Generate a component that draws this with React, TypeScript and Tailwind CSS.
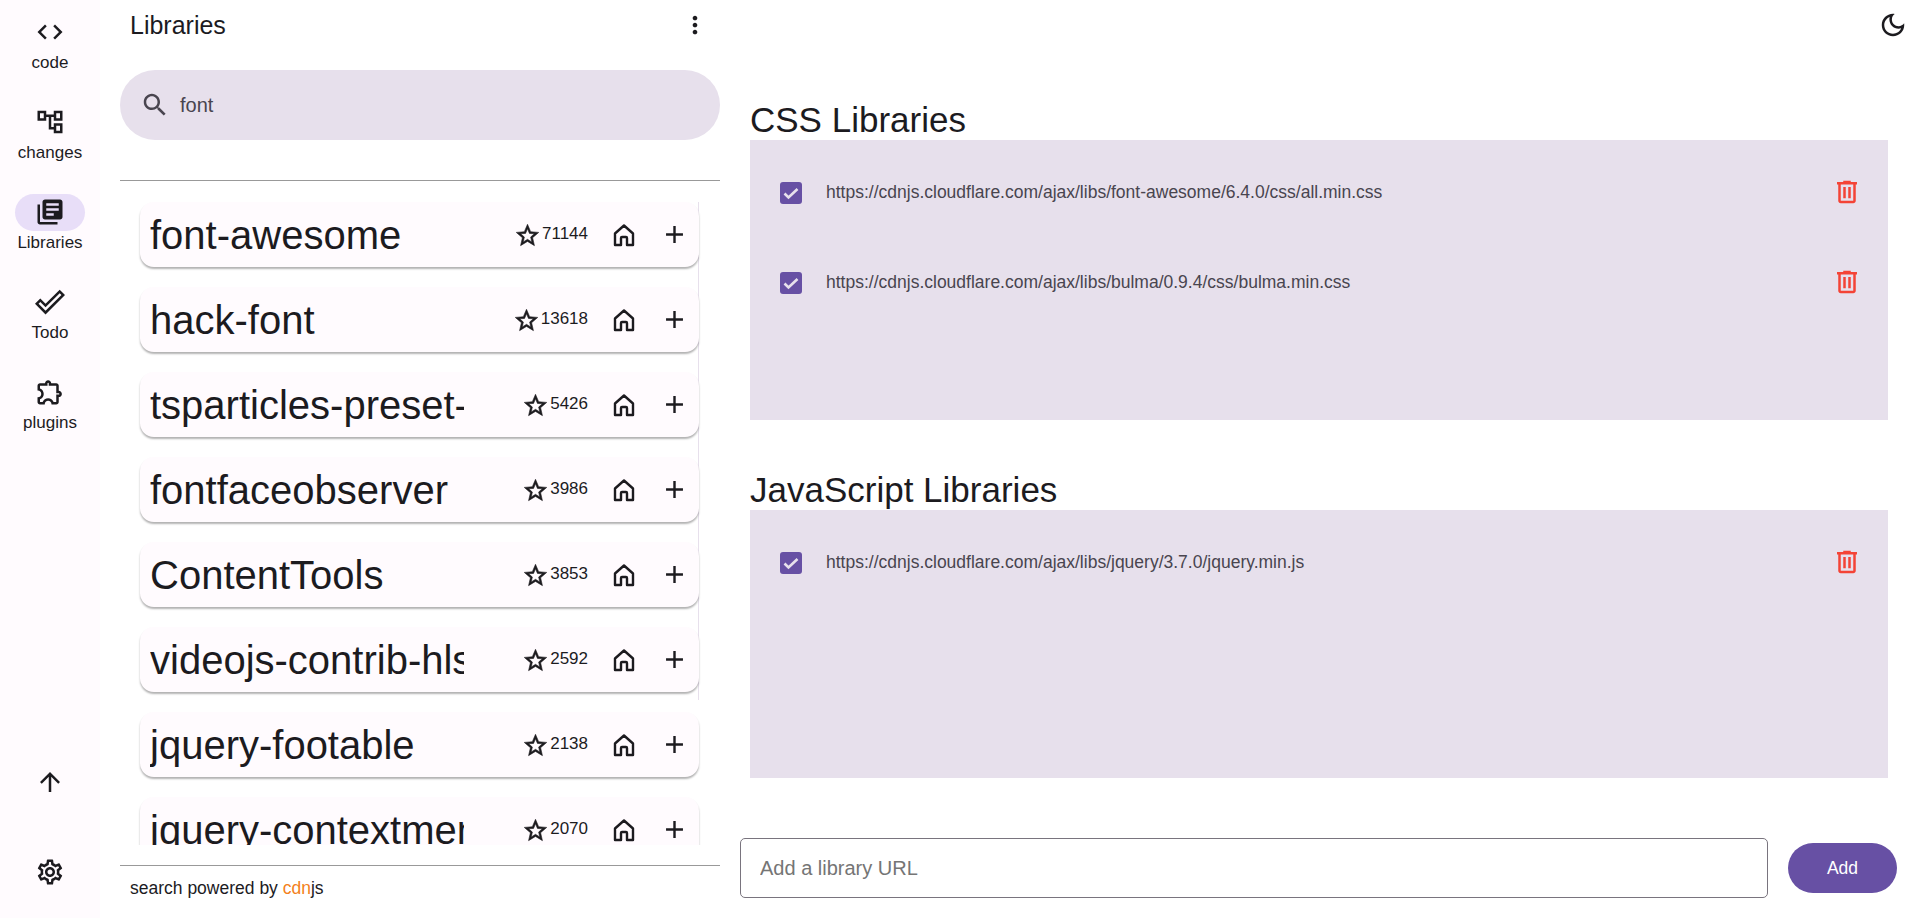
import React from "react";

const P = {
  code: "M9.4 16.6 4.8 12l4.6-4.6L8 6l-6 6 6 6 1.4-1.4zm5.2 0 4.6-4.6-4.6-4.6L16 6l6 6-6 6-1.4-1.4z",
  tree: "M22 11V3h-7v3H9V3H2v8h7V8h2v10h4v3h7v-8h-7v3h-2V8h2v3h7zM7 9H4V5h3v4zm10 6h3v4h-3v-4zm0-10h3v4h-3V5z",
  books: "M4 6H2v14c0 1.1.9 2 2 2h14v-2H4V6zm16-4H8c-1.1 0-2 .9-2 2v12c0 1.1.9 2 2 2h12c1.1 0 2-.9 2-2V4c0-1.1-.9-2-2-2zm-1 9H9V9h10v2zm-4 4H9v-2h6v2zm4-8H9V5h10v2z",
  done: "M19.77 4.93l1.4 1.4L8.43 19.07l-5.6-5.6 1.4-1.4 4.2 4.2L19.77 4.93m0-2.83L8.43 13.44l-4.2-4.2L0 13.47l8.43 8.43L24 6.33 19.77 2.1z",
  ext: "M10.5 4.5c.28 0 .5.22.5.5v2h6v6h2c.28 0 .5.22.5.5s-.22.5-.5.5h-2v6h-2.12c-.68-1.75-2.39-3-4.38-3s-3.7 1.25-4.38 3H4v-2.12c1.75-.68 3-2.39 3-4.38 0-1.99-1.24-3.7-2.99-4.38L4 7h6V5c0-.28.22-.5.5-.5m0-2C9.12 2.5 8 3.62 8 5H4c-1.1 0-1.99.9-1.99 2v3.8h.29c1.49 0 2.7 1.21 2.7 2.7s-1.21 2.7-2.7 2.7H2V20c0 1.1.9 2 2 2h3.8v-.3c0-1.49 1.21-2.7 2.7-2.7s2.7 1.21 2.7 2.7v.3H17c1.1 0 2-.9 2-2v-4c1.38 0 2.5-1.12 2.5-2.5S20.38 11 19 11V7c0-1.1-.9-2-2-2h-4c0-1.38-1.12-2.5-2.5-2.5z",
  up: "M4 12l1.41 1.41L11 7.83V20h2V7.83l5.58 5.59L20 12l-8-8-8 8z",
  gear: "M19.43 12.98c.04-.32.07-.64.07-.98 0-.34-.03-.66-.07-.98l2.11-1.65c.19-.15.24-.42.12-.64l-2-3.46c-.09-.16-.26-.25-.44-.25-.06 0-.12.01-.17.03l-2.49 1c-.52-.4-1.08-.73-1.69-.98l-.38-2.65C14.46 2.18 14.25 2 14 2h-4c-.25 0-.46.18-.49.42l-.38 2.65c-.61.25-1.17.59-1.69.98l-2.49-1c-.06-.02-.12-.03-.18-.03-.17 0-.34.09-.43.25l-2 3.46c-.13.22-.07.49.12.64l2.11 1.65c-.04.32-.07.65-.07.98 0 .33.03.66.07.98l-2.11 1.65c-.19.15-.24.42-.12.64l2 3.46c.09.16.26.25.44.25.06 0 .12-.01.17-.03l2.49-1c.52.4 1.08.73 1.69.98l.38 2.65c.03.24.24.42.49.42h4c.25 0 .46-.18.49-.42l.38-2.65c.61-.25 1.17-.59 1.69-.98l2.49 1c.06.02.12.03.18.03.17 0 .34-.09.43-.25l2-3.46c.12-.22.07-.49-.12-.64l-2.11-1.65zm-1.98-1.71c.04.31.05.52.05.73 0 .21-.02.43-.05.73l-.14 1.13.89.7 1.08.84-.7 1.21-1.27-.51-1.04-.42-.9.68c-.43.32-.84.56-1.25.73l-1.06.43-.16 1.13-.2 1.35h-1.4l-.19-1.35-.16-1.13-1.06-.43c-.43-.18-.83-.41-1.23-.71l-.91-.7-1.06.43-1.27.51-.7-1.21 1.08-.84.89-.7-.14-1.13c-.03-.31-.05-.54-.05-.74s.02-.43.05-.73l.14-1.13-.89-.7-1.08-.84.7-1.21 1.27.51 1.04.42.9-.68c.43-.32.84-.56 1.25-.73l1.06-.43.16-1.13.2-1.35h1.39l.19 1.35.16 1.13 1.06.43c.43.18.83.41 1.23.71l.91.7 1.06-.43 1.27-.51.7 1.21-1.07.85-.89.7.14 1.13zM12 8c-2.21 0-4 1.79-4 4s1.79 4 4 4 4-1.79 4-4-1.79-4-4-4zm0 6c-1.1 0-2-.9-2-2s.9-2 2-2 2 .9 2 2-.9 2-2 2z",
  more: "M12 8c1.1 0 2-.9 2-2s-.9-2-2-2-2 .9-2 2 .9 2 2 2zm0 2c-1.1 0-2 .9-2 2s.9 2 2 2 2-.9 2-2-.9-2-2-2zm0 6c-1.1 0-2 .9-2 2s.9 2 2 2 2-.9 2-2-.9-2-2-2z",
  search: "M15.5 14h-.79l-.28-.27C15.41 12.59 16 11.11 16 9.5 16 5.91 13.09 3 9.5 3S3 5.91 3 9.5 5.91 16 9.5 16c1.61 0 3.09-.59 4.23-1.57l.27.28v.79l5 4.99L20.49 19l-4.99-5zm-6 0C7.01 14 5 11.99 5 9.5S7.01 5 9.5 5 14 7.01 14 9.5 11.99 14 9.5 14z",
  star: "M22 9.24l-7.19-.62L12 2 9.19 8.63 2 9.24l5.46 4.73L5.82 21 12 17.27 18.18 21l-1.63-7.03L22 9.24zM12 15.4l-3.76 2.27 1-4.28-3.32-2.88 4.38-.38L12 6.1l1.71 4.04 4.38.38-3.32 2.88 1 4.28L12 15.4z",
  plus: "M19 13h-6v6h-2v-6H5v-2h6V5h2v6h6v2z",
  trash: "M15 4V3H9v1H4v2h1v13c0 1.1.9 2 2 2h10c1.1 0 2-.9 2-2V6h1V4h-5zm2 15H7V6h10v13zM9 8h2v9H9zm4 0h2v9h-2z",
  moon: "M9.37 5.51c-.18.64-.27 1.31-.27 1.99 0 4.08 3.32 7.4 7.4 7.4.68 0 1.35-.09 1.99-.27C17.45 17.19 14.93 19 12 19c-3.86 0-7-3.14-7-7 0-2.93 1.81-5.45 4.37-6.49zM12 3c-4.97 0-9 4.03-9 9s4.03 9 9 9 9-4.03 9-9c0-.46-.04-.92-.1-1.36-.98 1.37-2.58 2.26-4.4 2.26-2.98 0-5.4-2.42-5.4-5.4 0-1.81.89-3.42 2.26-4.4-.44-.06-.9-.1-1.36-.1z",
};

function Icon({ d, className }: { d: string; className: string }) {
  return (
    <svg viewBox="0 0 24 24" fill="currentColor" className={className}>
      <path d={d} />
    </svg>
  );
}

function StarIcon() {
  return (
    <svg viewBox="0 0 24 24" fill="currentColor" stroke="currentColor" strokeWidth="0.5" className="w-[27px] h-[27px] mr-[1px] mt-[1px]">
      <path d={P.star} />
    </svg>
  );
}

function HomeIcon() {
  return (
    <svg viewBox="0 0 24 24" fill="none" stroke="currentColor" strokeWidth="2.4" strokeLinejoin="round" className="w-[24px] h-[24px]">
      <path d="M3 22V10.5L12 2.5l9 8V22h-6v-7a1 1 0 0 0-1-1h-4a1 1 0 0 0-1 1v7z" />
    </svg>
  );
}

const nav = [
  { d: P.code, label: "code" },
  { d: P.tree, label: "changes" },
  { d: P.books, label: "Libraries", active: true },
  { d: P.done, label: "Todo" },
  { d: P.ext, label: "plugins" },
];

const libs: [string, string][] = [
  ["font-awesome", "71144"],
  ["hack-font", "13618"],
  ["tsparticles-preset-font", "5426"],
  ["fontfaceobserver", "3986"],
  ["ContentTools", "3853"],
  ["videojs-contrib-hls", "2592"],
  ["jquery-footable", "2138"],
  ["jquery-contextmenu", "2070"],
];

function Row({ url }: { url: string }) {
  return (
    <div className="h-[90px] flex items-center pl-[30px] pr-[26px] shrink-0">
      <span className="w-[22px] h-[22px] rounded-[3px] bg-[#6750a4] flex items-center justify-center shrink-0">
        <svg viewBox="0 0 22 22" fill="none" stroke="#e7e0ec" strokeWidth="2.6" className="w-[22px] h-[22px]">
          <path d="M4.5 11.5l4 4L17.5 7" />
        </svg>
      </span>
      <span className="ml-[24px] flex-1 text-[17.5px] text-[#49454f] mb-[2px]">{url}</span>
      <Icon d={P.trash} className="w-[30px] h-[30px] text-[#f44336] mb-[3px]" />
    </div>
  );
}

export default function App() {
  return (
    <div className="flex h-screen overflow-hidden bg-white text-[#1c1b1f] font-['Liberation_Sans',Arial,sans-serif]">
      <nav className="w-[100px] shrink-0 bg-[#fffbfe] flex flex-col items-center pt-[14px] pb-[31px]">
        <div className="flex flex-col items-center gap-[30px]">
          {nav.map((n) => (
            <div key={n.label} className="flex flex-col items-center h-[60px]">
              <span className={`w-[70px] h-[40px] rounded-full flex items-center justify-center ${n.active ? "bg-[#e8def8]" : ""}`}>
                <Icon d={n.d} className="w-[30px] h-[30px] mb-[1px]" />
              </span>
              <span className="text-[17px] leading-[22px] mt-[1px]">{n.label}</span>
            </div>
          ))}
        </div>
        <div className="mt-auto flex flex-col items-center gap-[60px]">
          <Icon d={P.up} className="w-[30px] h-[30px]" />
          <Icon d={P.gear} className="w-[30px] h-[30px]" />
        </div>
      </nav>

      <aside className="w-[630px] shrink-0 pl-[20px] pr-[10px] flex flex-col">
        <div className="h-[50px] flex items-center justify-between pl-[10px] pr-[11px] shrink-0">
          <span className="text-[25px] leading-[30px]">Libraries</span>
          <Icon d={P.more} className="w-[28px] h-[28px]" />
        </div>
        <div className="mt-[20px] h-[70px] rounded-full bg-[#e7e0ec] flex items-center pl-[20px] text-[#49454f] shrink-0">
          <Icon d={P.search} className="w-[30px] h-[30px]" />
          <span className="ml-[10px] text-[20px]">font</span>
        </div>
        <div className="mt-[40px] h-px bg-[#999999] shrink-0" />
        <div className="relative mt-[21px] h-[643px] shrink-0 overflow-hidden pl-[20px] pr-[21px]">
          <div className="absolute top-0 right-[21px] w-px h-[498px] bg-[#e7e0ec]" />
          <div className="flex flex-col gap-[20px]">
            {libs.map(([name, stars]) => (
              <div key={name} className="relative h-[65px] shrink-0 rounded-[14px] bg-[#fffbfe] shadow-[0_2px_2px_rgba(0,0,0,0.3)] flex items-center pl-[10px]">
                <span className="w-[314px] shrink-0 overflow-hidden whitespace-nowrap text-[40px] leading-[60px]">{name}</span>
                <div className="ml-auto flex items-center">
                  <StarIcon />
                  <span className="text-[17px] text-[#1c1b1f] mb-[2px]">{stars}</span>
                  <span className="ml-[11px] w-[50px] flex justify-center">
                    <HomeIcon />
                  </span>
                  <span className="w-[50px] flex justify-center">
                    <Icon d={P.plus} className="w-[29px] h-[29px]" />
                  </span>
                </div>
              </div>
            ))}
          </div>
        </div>
        <div className="mt-[20px] h-px bg-[#999999] shrink-0" />
        <div className="pl-[10px] pt-[12px] text-[17.5px] leading-[20px]">
          search powered by <span className="text-[#f38020]">cdn</span>js
        </div>
      </aside>

      <main className="flex-1 min-w-0 flex flex-col">
        <div className="h-[50px] flex items-center justify-end pr-[12px] shrink-0">
          <Icon d={P.moon} className="w-[30px] h-[30px]" />
        </div>
        <h2 className="mt-[50px] ml-[20px] h-[40px] text-[35px] leading-[40px]">CSS Libraries</h2>
        <div className="ml-[20px] mr-[32px] h-[280px] bg-[#e7e0ec] flex flex-col pt-[8px]">
          <Row url="https://cdnjs.cloudflare.com/ajax/libs/font-awesome/6.4.0/css/all.min.css" />
          <Row url="https://cdnjs.cloudflare.com/ajax/libs/bulma/0.9.4/css/bulma.min.css" />
        </div>
        <h2 className="mt-[50px] ml-[20px] h-[40px] text-[35px] leading-[40px]">JavaScript Libraries</h2>
        <div className="ml-[20px] mr-[32px] h-[268px] bg-[#e7e0ec] flex flex-col pt-[8px]">
          <Row url="https://cdnjs.cloudflare.com/ajax/libs/jquery/3.7.0/jquery.min.js" />
        </div>
        <div className="mt-[60px] ml-[10px] mr-[23px] flex items-center gap-[20px]">
          <input
            placeholder="Add a library URL"
            className="flex-1 min-w-0 h-[60px] rounded-[5px] border border-[#79747e] pl-[19px] pr-[19px] text-[20px] outline-none placeholder:text-[#757575]"
          />
          <button className="w-[109px] h-[50px] rounded-full bg-[#6750a4] text-white text-[17.5px]">Add</button>
        </div>
      </main>
    </div>
  );
}
